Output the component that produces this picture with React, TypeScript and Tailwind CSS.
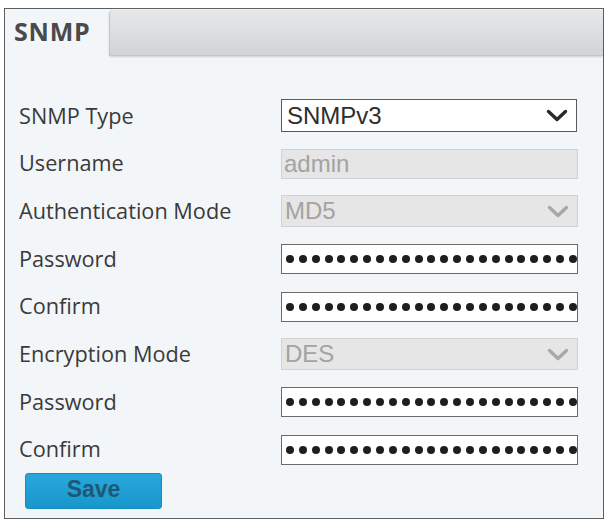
import React from "react";

const Dots = () => (
  <div className="flex h-full items-center justify-between pl-[4px] pr-[0px]">
    {Array.from({ length: 23 }).map((_, i) => (
      <span key={i} className="block h-[8px] w-[8px] shrink-0 rounded-full bg-[#1e1e1e]" />
    ))}
  </div>
);

const Chevron = ({ color }: { color: string }) => (
  <svg width="22" height="13" viewBox="0 0 22 13" className="mr-[8px]">
    <path d="M2.5 2.5 L11 10.5 L19.5 2.5" fill="none" stroke={color} strokeWidth="3.4" strokeLinecap="round" strokeLinejoin="round" />
  </svg>
);

const Label = ({ children }: { children: React.ReactNode }) => (
  <div className="w-[276px] pl-[14px] text-[21.7px] text-[#3a3a3a]" style={{ fontFamily: '"Open Sans", sans-serif' }}>
    {children}
  </div>
);

const fieldFont = { fontFamily: '"Liberation Sans", Arial, sans-serif' };

export default function App() {
  const rows: { label: string; kind: "select" | "disabledInput" | "disabledSelect" | "password"; value?: string }[] = [
    { label: "SNMP Type", kind: "select", value: "SNMPv3" },
    { label: "Username", kind: "disabledInput", value: "admin" },
    { label: "Authentication Mode", kind: "disabledSelect", value: "MD5" },
    { label: "Password", kind: "password" },
    { label: "Confirm", kind: "password" },
    { label: "Encryption Mode", kind: "disabledSelect", value: "DES" },
    { label: "Password", kind: "password" },
    { label: "Confirm", kind: "password" },
  ];
  return (
    <div className="h-[523px] w-[609px] bg-white pt-[8px]">
      <div className="ml-[4px] flex h-[511px] w-[600px] flex-col border border-[#5f5f5f] bg-[#f3f6f9]">
        <div className="flex h-[47px]">
          <div className="flex w-[104px] items-center pl-[9px] pb-[2px] text-[25px] font-bold tracking-[0.8px] text-[#4a4a4a]" style={{ fontFamily: '"Open Sans", sans-serif' }}>
            SNMP
          </div>
          <div className="mt-[1px] flex-1 rounded-tl-[4px] border-b border-l border-[#c4c7ca] bg-gradient-to-b from-[#e6e8ea] to-[#d1d4d7] shadow-[0_1px_2px_rgba(0,0,0,0.15)]" />
        </div>
        <div className="flex flex-col pt-[36px]">
          {rows.map((r, i) => (
            <div key={i} className="flex h-[47.7px] items-center">
              <Label>{r.label}</Label>
              {r.kind === "select" && (
                <div className="flex h-[33px] w-[296px] items-center justify-between border-[1.5px] border-[#5a5a5a] bg-white pl-[5px] text-[24px] text-[#2e2e2e]" style={fieldFont}>
                  <span>{r.value}</span>
                  <Chevron color="#2a2a2a" />
                </div>
              )}
              {r.kind === "disabledInput" && (
                <div className="flex h-[30px] w-[297px] items-center border border-[#d2d2d2] bg-[#e6e6e6] pl-[2px] text-[24px] text-[#a3a3a3]" style={fieldFont}>
                  {r.value}
                </div>
              )}
              {r.kind === "disabledSelect" && (
                <div className="flex h-[32px] w-[297px] items-center justify-between border border-[#d2d2d2] bg-[#e6e6e6] pl-[3px] text-[24px] text-[#a3a3a3]" style={fieldFont}>
                  <span>{r.value}</span>
                  <Chevron color="#a8a8a8" />
                </div>
              )}
              {r.kind === "password" && (
                <div className="h-[30px] w-[297px] border-[1.5px] border-[#6a6a6a] bg-white">
                  <Dots />
                </div>
              )}
            </div>
          ))}
          <div className="ml-[20px] mt-[-1px] flex h-[36px] w-[137px] items-center justify-center rounded-[3px] border border-[#168dbf] bg-gradient-to-b from-[#27a8dc] to-[#1797cb] pb-[2px] text-[23px] font-bold text-[#1f5877]" style={fieldFont}>
            Save
          </div>
        </div>
      </div>
    </div>
  );
}
